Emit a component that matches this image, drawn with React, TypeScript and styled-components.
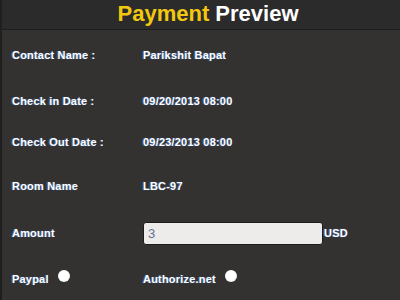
import React from 'react';
import styled, { createGlobalStyle } from 'styled-components';

const Global = createGlobalStyle`
  html, body {
    margin: 0;
    padding: 0;
    background: #333231;
  }
  body {
    font-family: "Liberation Sans", Arial, sans-serif;
  }
`;

const Panel = styled.div`
  width: 400px;
  height: 300px;
  overflow: hidden;
  background: #333231;
  border-left: 2px solid #1f1f1f;
  box-sizing: border-box;
`;

const Header = styled.div`
  height: 30px;
  background: #2b2b2b;
  border-bottom: 1px solid #1e1e1e;
  display: flex;
  align-items: center;
  justify-content: center;
  padding: 0 0 2px 14px;
  box-sizing: border-box;
`;

const Title = styled.h1`
  margin: 0;
  font-size: 22px;
  font-weight: 700;
  color: #fff;
`;

const Accent = styled.span`
  color: #f2c80f;
`;

const Form = styled.div`
  display: flex;
  flex-direction: column;
  padding: 2px 0 0 10px;
`;

const Row = styled.div<{ $h: number }>`
  display: grid;
  grid-template-columns: 131px 1fr;
  align-items: center;
  height: ${(p) => p.$h}px;
`;

const Text = styled.span`
  font-size: 11px;
  font-weight: 700;
  letter-spacing: 0.2px;
  color: #fff;
  text-shadow: -1px 0 1px rgba(70, 120, 220, 0.9);
  display: inline-flex;
  align-items: center;
`;

const AmountBox = styled.div`
  display: flex;
  align-items: center;
  gap: 1px;
`;

const Input = styled.input`
  width: 180px;
  height: 23px;
  box-sizing: border-box;
  border: 1px solid #1c1c1c;
  border-radius: 3px;
  background: #eeecea;
  color: #5f7290;
  font-family: "Liberation Sans", Arial, sans-serif;
  font-size: 13px;
  padding: 0 4px;
  outline: none;
`;

const Radio = styled.span`
  display: inline-block;
  width: 12px;
  height: 12px;
  border-radius: 50%;
  background: radial-gradient(circle at 40% 35%, #ffffff 55%, #d8d8d8 100%);
  margin-left: 9px;
  margin-top: -6px;
`;

const rows: [string, string, number][] = [
  ['Contact Name :', 'Parikshit Bapat', 46],
  ['Check in Date :', '09/20/2013 08:00', 46],
  ['Check Out Date :', '09/23/2013 08:00', 36],
  ['Room Name', 'LBC-97', 52],
];

export default function App() {
  return (
    <>
      <Global />
      <Panel>
        <Header>
          <Title>
            <Accent>Payment</Accent> Preview
          </Title>
        </Header>
        <Form>
          {rows.map(([label, value, h]) => (
            <Row key={label} $h={h}>
              <Text>{label}</Text>
              <Text>{value}</Text>
            </Row>
          ))}
          <Row $h={42}>
            <Text>Amount</Text>
            <AmountBox>
              <Input defaultValue="3" readOnly />
              <Text>USD</Text>
            </AmountBox>
          </Row>
          <Row $h={50}>
            <Text>
              Paypal<Radio />
            </Text>
            <Text>
              Authorize.net<Radio />
            </Text>
          </Row>
        </Form>
      </Panel>
    </>
  );
}
